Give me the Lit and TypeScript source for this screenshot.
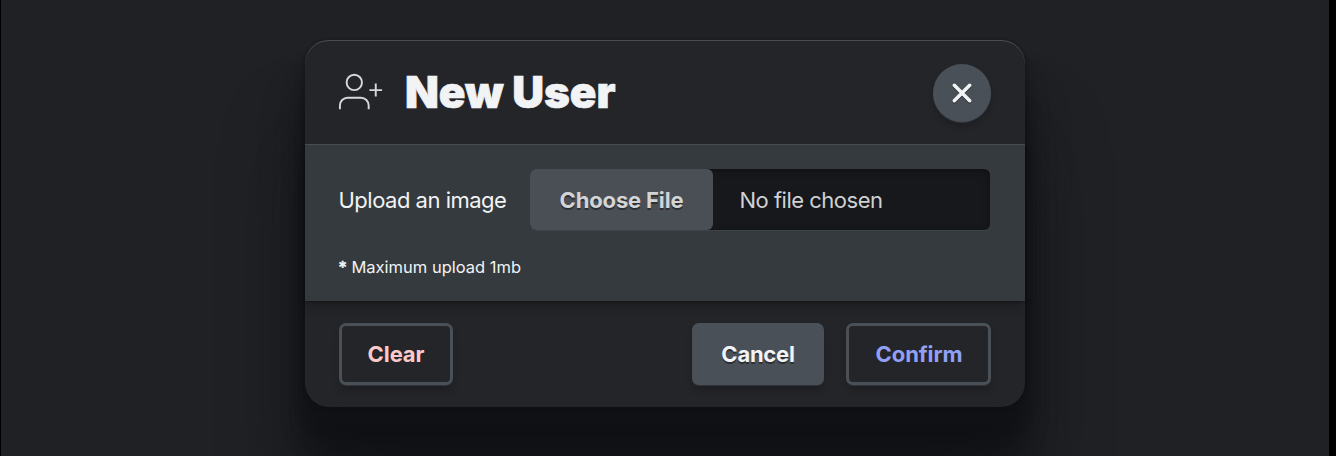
import { LitElement, html, css } from "lit";
import { customElement } from "lit/decorators.js";

@customElement("app-root")
export class AppRoot extends LitElement {
  static styles = css`
    :host {
      display: block;
      height: 456px;
      overflow: hidden;
      box-sizing: border-box;
      background: #202125;
      border-left: 1px solid #000;
      border-right: 7px solid #000;
      font-family: Inter, "Liberation Sans", sans-serif;
      color: #f1f3f5;
    }
    * {
      box-sizing: border-box;
    }
    .stage {
      padding: 40px 0 0 304px;
    }
    .dialog {
      width: 720px;
      height: 367px;
      border-radius: 24px;
      background: #242529;
      display: flex;
      flex-direction: column;
      box-shadow:
        0 -1px 3px rgba(12, 13, 15, 0.2),
        0 2px 4px rgba(17, 18, 21, 0.3),
        0 20px 14px -4px rgba(17, 18, 21, 0.7),
        0 36px 24px -4px rgba(17, 18, 21, 0.85),
        0 60px 44px -4px rgba(17, 18, 21, 0.85),
        0 96px 80px -4px rgba(17, 18, 21, 0.6);
    }
    .head {
      height: 104px;
      flex: none;
      display: flex;
      align-items: center;
      padding: 2px 34px 0 33px;
      border-radius: 24px 24px 0 0;
      box-shadow: inset 0 1px 0 #4b4d51;
    }
    .user {
      width: 46px;
      height: 46px;
      margin-right: 21px;
      margin-top: -2px;
      fill: none;
      stroke: #d6d8db;
      stroke-width: 1;
    }
    h2 {
      margin: -2px 0 0;
      font-size: 44px;
      line-height: 50px;
      font-weight: 900;
      letter-spacing: -0.05px;
      -webkit-text-stroke: 0.7px #f1f3f5;
      white-space: nowrap;
      flex: 1;
    }
    button {
      font: inherit;
      margin: 0;
      padding: 0;
      color: inherit;
    }
    .close {
      width: 58px;
      height: 58px;
      border: 0;
      border-radius: 50%;
      background: #495057;
      display: grid;
      place-items: center;
      box-shadow: 0 1px 1px rgba(73, 80, 87, 0.5), 0 5px 7px -2px rgba(10, 11, 13, 0.35);
    }
    .close svg {
      width: 30px;
      height: 30px;
      fill: none;
      stroke: #f1f3f5;
      stroke-width: 3.6;
      stroke-linecap: round;
      filter: drop-shadow(0 1px 0 #25282b);
    }
    .body {
      height: 157px;
      flex: none;
      padding: 24px 35px 0 33.5px;
      background: #353a3e;
      border-top: 1px solid #484d51;
      box-shadow: 0 1px 2px rgba(10, 11, 13, 0.4), 0 8px 10px -4px rgba(10, 11, 13, 0.4);
    }
    .row {
      display: flex;
      align-items: center;
      height: 61px;
    }
    .label {
      width: 191px;
      font-size: 22px;
      letter-spacing: -0.5px;
      white-space: nowrap;
      padding-top: 1px;
    }
    .picker {
      flex: 1;
      height: 61px;
      display: flex;
      align-items: center;
      border-radius: 6px;
      background: #17181c;
      box-shadow: inset 0 2px 6px rgba(8, 9, 11, 0.5), 0 1px 0 #3d4246;
      font-size: 22px;
    }
    .choose {
      width: 183px;
      height: 61px;
      border: 0;
      border-radius: 6px;
      background: #4a4e55;
      color: #d3d4d5;
      font-weight: 700;
      letter-spacing: -0.15px;
      text-shadow: 0 1.5px 0 #2c2f33;
      white-space: nowrap;
      padding: 1px 0 0 1px;
    }
    .none {
      padding: 1px 0 0 27px;
      color: #cfd1d3;
      letter-spacing: -0.5px;
      white-space: nowrap;
    }
    .note {
      margin-top: 27px;
      font-size: 16.5px;
      line-height: 20px;
      white-space: nowrap;
    }
    .star {
      -webkit-text-stroke: 0.6px #f1f3f5;
    }
    .foot {
      flex: 1;
      display: flex;
      align-items: flex-start;
      padding: 22px 34px 0 34px;
      gap: 22px;
    }
    .btn {
      height: 62px;
      border: 3px solid #495057;
      border-radius: 7px;
      background: transparent;
      font-size: 22px;
      font-weight: 700;
      letter-spacing: -0.1px;
      white-space: nowrap;
      box-shadow: 0 1px 0 rgba(73, 80, 87, 0.45), 0 6px 8px -3px rgba(10, 11, 13, 0.4);
    }
    .clear {
      width: 114px;
      color: #fcc9c9;
      margin-right: auto;
    }
    .cancel {
      width: 132px;
      background: #495057;
      letter-spacing: -0.25px;
      text-shadow: 0 1.5px 0 #2c2f33;
    }
    .confirm {
      width: 145px;
      padding-left: 1px;
      color: #91a0f5;
    }
  `;

  render() {
    return html`
      <div class="stage">
        <section class="dialog">
          <header class="head">
            <svg class="user" viewBox="0 0 24 24">
              <circle cx="8.5" cy="7" r="4"></circle>
              <path d="M16 21v-2a4 4 0 0 0-4-4H5a4 4 0 0 0-4 4v2M19.7 7.6v6.8M23 11h-6.6"></path>
            </svg>
            <h2>New User</h2>
            <button class="close" aria-label="Close">
              <svg viewBox="0 0 30 30"><path d="M7.3 7.3 22.7 22.7M22.7 7.3 7.3 22.7"></path></svg>
            </button>
          </header>
          <div class="body">
            <div class="row">
              <div class="label">Upload an image</div>
              <div class="picker">
                <button class="choose">Choose File</button>
                <span class="none">No file chosen</span>
              </div>
            </div>
            <div class="note"><span class="star">*</span> Maximum upload 1mb</div>
          </div>
          <footer class="foot">
            <button class="btn clear">Clear</button>
            <button class="btn cancel">Cancel</button>
            <button class="btn confirm">Confirm</button>
          </footer>
        </section>
      </div>
    `;
  }
}
